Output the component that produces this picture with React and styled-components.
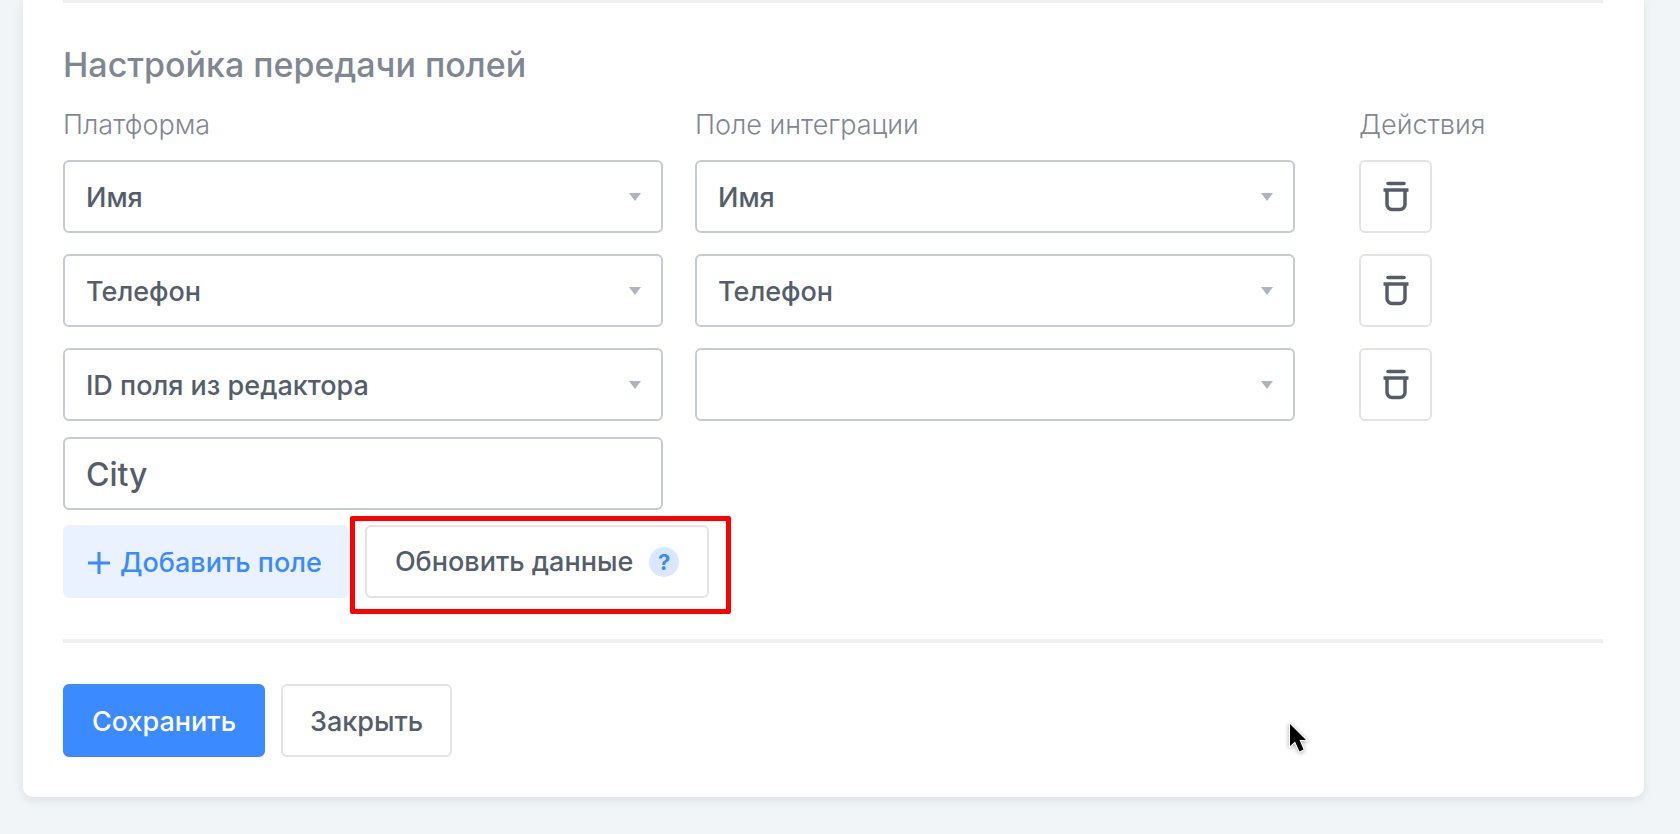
import React, { useState } from "react";
import styled, { createGlobalStyle } from "styled-components";

const GlobalStyle = createGlobalStyle`
  * {
    box-sizing: border-box;
  }

  body {
    margin: 0;
    background: #f1f5f8;
    color: #545e6b;
    font-family: Inter, "Liberation Sans", sans-serif;
    font-size: 27px;
    line-height: 28px;
  }
`;

const Card = styled.main`
  margin: 0 36px 36px 23px;
  padding: 0 41px 40px 40px;
  background: white;
  border-radius: 0 0 10px 10px;
  box-shadow: 0 3px 10px rgba(60, 85, 90, 0.13);
`;

const Divider = styled.hr`
  height: ${props => (props.$thin ? "3px" : "4px")};
  margin: 0;
  border: 0;
  background: #eeeeee;
`;

const Headline = styled.h2`
  margin: 42px 0 26px;
  color: #7f8792;
  font-size: 34px;
  font-weight: 500;
  line-height: 40px;
`;

const FieldGrid = styled.div`
  display: grid;
  grid-template-columns: 50fr 50fr 23fr;
  column-gap: 32px;
  row-gap: 21px;
`;

const ColumnLabel = styled.span`
  color: #7f8792;
  font-weight: 300;
`;

const ActionCell = styled.div`
  padding-left: 32px;
`;

const FieldStack = styled.div`
  display: grid;
  gap: 16px;
`;

const SelectBox = styled.div`
  display: grid;
  align-items: center;
  height: 73px;

  > * {
    grid-area: 1 / 1;
  }
`;

const StyledSelect = styled.select`
  appearance: none;
  width: 100%;
  height: 73px;
  padding: 2px 60px 0 21px;
  border: 2px solid #c5cad4;
  border-radius: 6px;
  background: white;
  color: inherit;
  font: inherit;
  font-weight: 500;
`;

const Arrow = styled.svg`
  justify-self: end;
  margin-right: 22px;
  pointer-events: none;
`;

const StyledInput = styled.input`
  width: 100%;
  height: 73px;
  padding: 2px 21px 0;
  border: 2px solid #c5cad4;
  border-radius: 6px;
  background: white;
  color: inherit;
  font: inherit;
  font-size: 32px;
  font-weight: 500;
`;

const ButtonRow = styled.div`
  display: flex;
  gap: 16px;
  margin: ${props => props.$margin};
`;

const Button = styled.button`
  display: inline-flex;
  align-items: center;
  justify-content: center;
  height: 73px;
  padding: 2px 27px 0;
  border: 2px solid #e0e4e9;
  border-radius: 6px;
  background: white;
  color: inherit;
  font: inherit;
  font-weight: 500;
  white-space: nowrap;
`;

const PrimaryButton = styled(Button)`
  border-color: #3b8aff;
  background: #3b8aff;
  color: white;
`;

const AddButton = styled(Button)`
  gap: 10px;
  padding: 2px 25px 0 23px;
  border-color: #ebf2ff;
  background: #ebf2ff;
  color: #3b8aff;
`;

const RefreshButton = styled(Button)`
  gap: 16px;
  padding: 0 28px;
`;

const IconButton = styled(Button)`
  width: 73px;
  padding: 0;
`;

const Hint = styled.span`
  display: flex;
  align-items: center;
  justify-content: center;
  width: 30px;
  height: 30px;
  border-radius: 50%;
  background: #dae8ff;
  color: #3b8aff;
  font-size: 22px;
  font-weight: 700;
`;

const Highlight = styled.div`
  position: relative;

  &::after {
    content: "";
    position: absolute;
    inset: -9px -22px -16px -15px;
    border: 5px solid #ff0000;
    border-radius: 2px;
    pointer-events: none;
  }
`;

const Pointer = styled.svg`
  position: absolute;
  top: 720px;
  left: 1286px;
  pointer-events: none;
  filter: drop-shadow(0 1px 2px rgba(0, 0, 0, 0.35));
`;

const options = ["", "Имя", "Телефон", "ID поля из редактора"];

const startRows = [
  { id: 1, platform: "Имя", target: "Имя" },
  { id: 2, platform: "Телефон", target: "Телефон" },
  { id: 3, platform: "ID поля из редактора", target: "", custom: "City" }
];

function TrashIcon() {
  return (
    <svg width="26" height="32" viewBox="0 0 26 32" fill="none" stroke="#545e6b">
      <path d="M5 2.500h16" strokeWidth="3.500" strokeLinecap="round" />
      <path d="M0.500 9h25" strokeWidth="3.500" />
      <path d="M4 9v14.500a5 5 0 0 0 5 5h8a5 5 0 0 0 5-5V9" strokeWidth="3.500" />
    </svg>
  );
}

function PlusIcon() {
  return (
    <svg width="22" height="22" viewBox="0 0 22 22" stroke="#3b8aff">
      <path d="M11 0v22M0 11h22" strokeWidth="3" />
    </svg>
  );
}

function Select({ value, onChange, label }) {
  return (
    <SelectBox>
      <StyledSelect value={value} onChange={onChange} aria-labelledby={label}>
        {options.map(option => (
          <option key={option}>{option}</option>
        ))}
      </StyledSelect>
      <Arrow width="12" height="8" viewBox="0 0 12 8">
        <path d="M0 0h12L6 8z" fill="#adb4c0" />
      </Arrow>
    </SelectBox>
  );
}

export default function App() {
  const [rows, setRows] = useState(startRows);

  function updateRow(id, change) {
    setRows(rows.map(row => (row.id === id ? { ...row, ...change } : row)));
  }

  function addRow() {
    setRows([...rows, { id: Date.now(), platform: "", target: "" }]);
  }

  return (
    <>
      <GlobalStyle />
      <Card>
        <Divider $thin />
        <Headline>Настройка передачи полей</Headline>
        <FieldGrid>
          <ColumnLabel id="platform">Платформа</ColumnLabel>
          <ColumnLabel id="target">Поле интеграции</ColumnLabel>
          <ActionCell>
            <ColumnLabel>Действия</ColumnLabel>
          </ActionCell>
          {rows.map(row => (
            <React.Fragment key={row.id}>
              <FieldStack>
                <Select
                  label="platform"
                  value={row.platform}
                  onChange={event => updateRow(row.id, { platform: event.target.value })}
                />
                {row.custom !== undefined && (
                  <StyledInput
                    aria-label="ID поля"
                    value={row.custom}
                    onChange={event => updateRow(row.id, { custom: event.target.value })}
                  />
                )}
              </FieldStack>
              <Select
                label="target"
                value={row.target}
                onChange={event => updateRow(row.id, { target: event.target.value })}
              />
              <ActionCell>
                <IconButton
                  type="button"
                  aria-label="Удалить"
                  onClick={() => setRows(rows.filter(({ id }) => id !== row.id))}
                >
                  <TrashIcon />
                </IconButton>
              </ActionCell>
            </React.Fragment>
          ))}
        </FieldGrid>
        <ButtonRow $margin="15px 0 41px">
          <AddButton type="button" onClick={addRow}>
            <PlusIcon />
            Добавить поле
          </AddButton>
          <Highlight>
            <RefreshButton type="button">
              Обновить данные
              <Hint>?</Hint>
            </RefreshButton>
          </Highlight>
        </ButtonRow>
        <Divider />
        <ButtonRow $margin="41px 0 0">
          <PrimaryButton type="submit">Сохранить</PrimaryButton>
          <Button type="button">Закрыть</Button>
        </ButtonRow>
      </Card>
      <Pointer width="26" height="38" viewBox="0 0 26 38">
        <path
          d="M4 4v22l5-4.500 4.500 10 4-2-4-9.500h6.500z"
          fill="black"
          stroke="white"
          strokeWidth="2"
          paintOrder="stroke"
        />
      </Pointer>
    </>
  );
}
